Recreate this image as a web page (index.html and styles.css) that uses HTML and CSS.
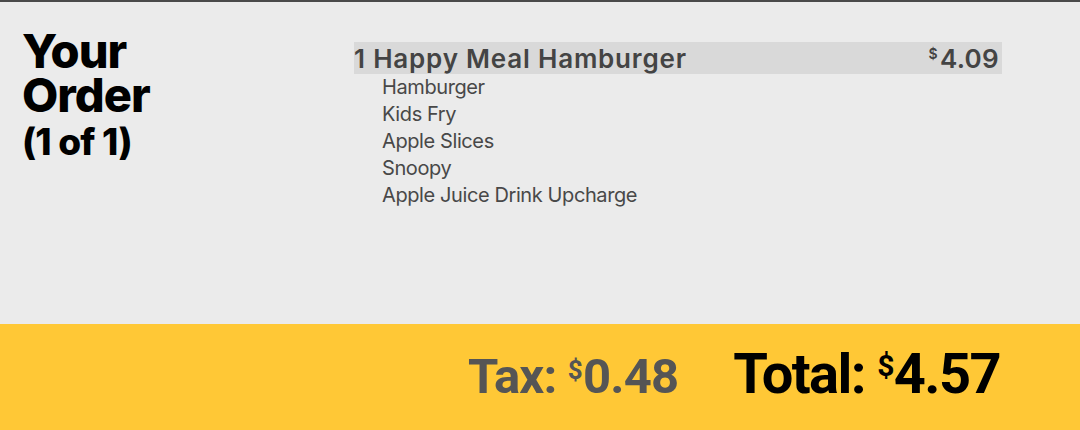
FILE: index.html
```html
<!DOCTYPE html>
<html>
<head>
<meta charset="utf-8">
<link rel="stylesheet" href="styles.css">
</head>
<body>
<div class="screen">
  <main class="main">
    <div class="title">
      <div class="title-big">Your<br>Order</div>
      <div class="title-small">(1 of 1)</div>
    </div>
    <div class="order">
      <div class="item-head">
        <span class="item-name">1 Happy Meal Hamburger</span>
        <span class="item-price"><sup>$</sup>4.09</span>
      </div>
      <ul class="subs">
        <li>Hamburger</li>
        <li>Kids Fry</li>
        <li>Apple Slices</li>
        <li>Snoopy</li>
        <li>Apple Juice Drink Upcharge</li>
      </ul>
    </div>
  </main>
  <footer class="footer">
    <span class="tax">Tax: <sup>$</sup>0.48</span>
    <span class="total">Total: <sup>$</sup>4.57</span>
  </footer>
</div>
</body>
</html>
```
FILE: styles.css
```css
html, body { margin: 0; padding: 0; }
body { width: 1080px; height: 430px; overflow: hidden; background: #ebebeb; font-family: Inter, "Noto Sans", sans-serif; }
.screen { display: flex; flex-direction: column; height: 430px; border-top: 2px solid #4a4a4a; box-sizing: border-box; }
.main { flex: 1; display: flex; padding: 27px 0 0 22px; }
.title { width: 332px; color: #000; }
.title-big { font-size: 47px; font-weight: 800; line-height: 44px; letter-spacing: -1px; }
.title-small { font-size: 37px; font-weight: 800; line-height: 50px; letter-spacing: -0.8px; }
.order { width: 648px; padding-top: 13px; }
.item-head { display: flex; justify-content: space-between; align-items: center; background: #d9d9d9; height: 32px; color: #444; font-size: 26px; font-weight: 600; letter-spacing: 0.8px; }
.item-price { padding-right: 3px; letter-spacing: 0.3px; }
.item-head sup { font-size: 14px; vertical-align: 9px; margin-right: 2px; }
.subs { list-style: none; margin: 0; padding: 0 0 0 28px; color: #484848; font-size: 20px; font-weight: 400; line-height: 27px; letter-spacing: -0.4px; }
.footer { height: 106px; background: #ffc836; display: flex; justify-content: flex-end; align-items: baseline; padding: 17px 80px 0 0; box-sizing: border-box; gap: 55px; font-family: Roboto, sans-serif; font-weight: 700; }
.tax { color: #555; font-size: 49px; letter-spacing: -0.8px; }
.total { color: #000; font-size: 56px; letter-spacing: -1.6px; }
.tax sup { font-size: 26px; vertical-align: 14px; margin-right: 1px; }
.total sup { font-size: 30px; vertical-align: 17px; margin-right: 1px; }
```
